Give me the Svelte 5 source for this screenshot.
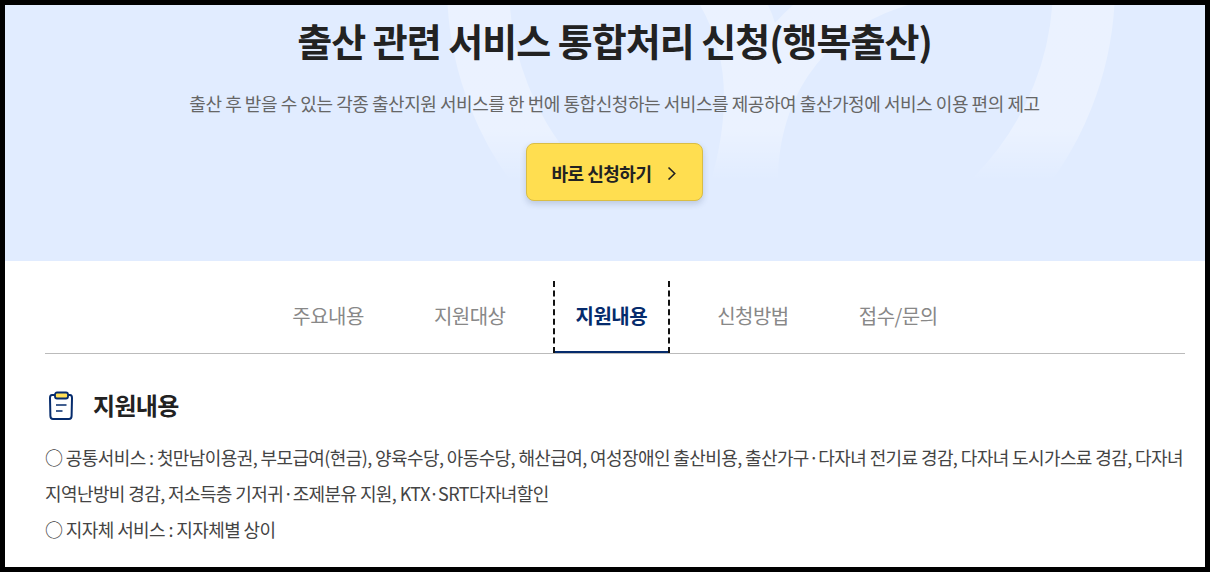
<script>
  const tabs = ['주요내용', '지원대상', '지원내용', '신청방법', '접수/문의'];
  let current = $state(2);

  const lines = [
    '○ 공통서비스 : 첫만남이용권, 부모급여(현금), 양육수당, 아동수당, 해산급여, 여성장애인 출산비용, 출산가구·다자녀 전기료 경감, 다자녀 도시가스료 경감, 다자녀 지역난방비 경감, 저소득층 기저귀·조제분유 지원, KTX·SRT다자녀할인',
    '○ 지자체 서비스 : 지자체별 상이'
  ];
</script>

<div class="page">
  <header class="hero">
    <svg class="pattern" viewBox="0 0 1200 256" aria-hidden="true">
      <defs>
        <linearGradient id="fade" gradientUnits="userSpaceOnUse" x1="0" y1="125" x2="0" y2="176">
          <stop offset="0" stop-color="#fff" stop-opacity="0.33" />
          <stop offset="1" stop-color="#fff" stop-opacity="0" />
        </linearGradient>
      </defs>
      <circle cx="776" cy="-20" r="303" stroke-width="62" fill="none" stroke="url(#fade)" />
      <path fill="url(#fade)" d="M695 0 Q719 42 719 92 Q719 130 706 176 H773 C774 90 820 25 903 0 H788 Q778 9 770 18 Q767 8 763 0 Z" />
    </svg>
    <h1>출산 관련 서비스 통합처리 신청(행복출산)</h1>
    <p class="summary">출산 후 받을 수 있는 각종 출산지원 서비스를 한 번에 통합신청하는 서비스를 제공하여 출산가정에 서비스 이용 편의 제고</p>
    <button class="apply">
      <span>바로 신청하기</span>
      <svg width="10" height="14" viewBox="0 0 10 14" aria-hidden="true">
        <path d="M1.5 1.5 L7.7 7.5 L1.5 13.5" fill="none" stroke="#222" stroke-width="1.6" />
      </svg>
    </button>
  </header>

  <nav class="tabs">
    {#each tabs as tab, i}
      <button class="tab" class:active={i === current} onclick={() => (current = i)}>{tab}</button>
    {/each}
  </nav>

  <section class="detail">
    <h2>
      <svg width="32" height="32" viewBox="0 0 32 32" aria-hidden="true">
        <path d="M7 5H25Q27 5 27 8L26.6 26Q26.5 29 24 29H8Q5.5 29 5.4 26L5 8Q5 5 7 5Z" fill="#fff" stroke="#052b6c" stroke-width="2" />
        <rect x="10" y="2.5" width="13" height="6" rx="2" fill="#ffdf57" stroke="#052b6c" stroke-width="1.8" />
        <path d="M11 15h10.5M11 21h6.5" stroke="#052b6c" stroke-width="1.5" />
      </svg>
      <span>{tabs[2]}</span>
    </h2>
    {#each lines as line}
      <p>{line}</p>
    {/each}
  </section>
</div>

<style>
  :global(body) {
    margin: 0;
  }

  .page {
    box-sizing: border-box;
    width: 1210px;
    height: 572px;
    border: 5px solid #000;
    background: #fff;
    overflow: hidden;
    font-family: 'Noto Sans CJK KR', sans-serif;
    color: #222;
  }

  .hero {
    position: relative;
    display: flex;
    flex-direction: column;
    align-items: center;
    box-sizing: border-box;
    height: 256px;
    padding: 7px 0 0 19px;
    background: #e1ecff;
  }

  .pattern {
    position: absolute;
    inset: 0;
    width: 1200px;
    height: 256px;
  }

  h1,
  .summary,
  .apply {
    position: relative;
  }

  h1 {
    margin: 0;
    font-size: 38px;
    font-weight: 700;
    line-height: 56px;
    letter-spacing: -1px;
    white-space: nowrap;
  }

  .summary {
    margin: 21px 0 0;
    font-size: 18px;
    line-height: 28px;
    letter-spacing: -0.45px;
    color: #666;
    white-space: nowrap;
  }

  .apply {
    display: flex;
    align-items: center;
    justify-content: center;
    gap: 16px;
    box-sizing: border-box;
    width: 177px;
    height: 58px;
    margin-top: 26px;
    padding: 1px 0 0;
    border: 1px solid #d9bd45;
    border-radius: 8px;
    background: #ffde50;
    box-shadow: 0 3px 6px rgba(40, 60, 100, 0.2);
    font-family: inherit;
    font-size: 18px;
    font-weight: 700;
    letter-spacing: -0.5px;
    color: #222;
  }

  .tabs {
    display: flex;
    justify-content: center;
    gap: 25px;
    box-sizing: border-box;
    height: 73px;
    margin: 20px 20px 0 40px;
    border-bottom: 1px solid #bbb;
  }

  .tab {
    box-sizing: border-box;
    height: 72px;
    padding: 0 20.5px 3px;
    border: 0 dashed transparent;
    border-width: 0 2px;
    background: none;
    font-family: inherit;
    font-size: 20px;
    letter-spacing: -0.5px;
    color: #888;
  }

  .tab.active {
    border-color: #111;
    box-shadow: inset 0 -2px #052b6c;
    font-weight: 700;
    color: #052b6c;
  }

  .detail {
    padding: 35px 20px 0 40px;
  }

  h2 {
    display: flex;
    align-items: center;
    gap: 16px;
    margin: 0 0 16px;
    font-size: 24px;
    font-weight: 700;
    line-height: 36px;
    letter-spacing: -0.7px;
  }

  h2 span {
    margin-top: -2px;
  }

  .detail p {
    margin: 0;
    font-size: 18px;
    line-height: 36px;
    letter-spacing: -0.6px;
    word-break: keep-all;
    color: #444;
  }
</style>
